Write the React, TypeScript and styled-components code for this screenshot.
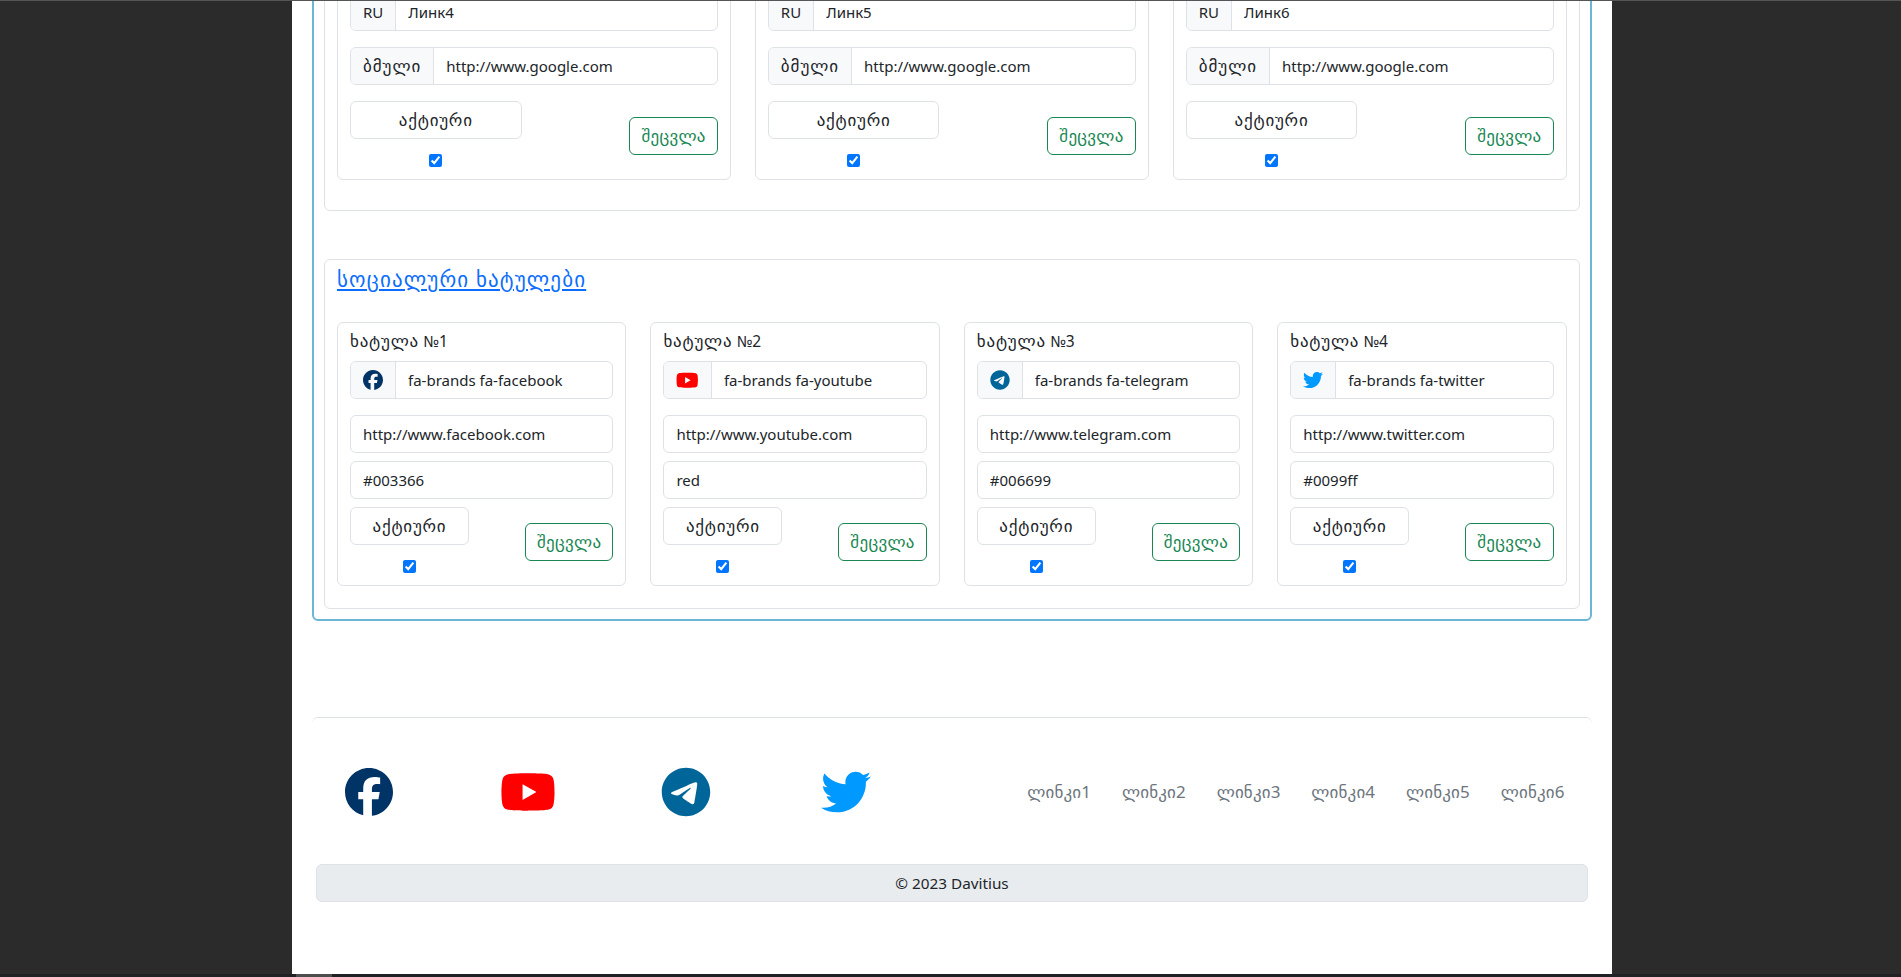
import React from "react";
import styled, { createGlobalStyle } from "styled-components";
import { FaFacebook, FaYoutube, FaTelegram, FaTwitter } from "react-icons/fa6";

const Global = createGlobalStyle`
  html, body { margin: 0; height: 100%; overflow: hidden; background: #2b2b2b; }
  body { font-family: "Noto Sans", "DejaVu Sans", sans-serif; font-size: 16px; line-height: 1.5; color: #212529; }
  * { box-sizing: border-box; }
`;

const Page = styled.div`
  display: flex;
  flex-direction: column;
  height: 977px;
  overflow: hidden;
  background: #2b2b2b;
`;
const TopEdge = styled.div`
  height: 1px;
  flex: none;
  background: #555;
`;
const Viewport = styled.div`
  flex: 1;
  min-height: 0;
  overflow: hidden;
  padding-left: 292px;
`;
const Sheet = styled.main`
  width: 1320px;
  height: 100%;
  background: #fff;
  padding: 0 20px 72px;
  display: flex;
  flex-direction: column;
  justify-content: flex-end;
  & > * { flex: none; }
`;
const ScrollTrack = styled.div`
  height: 3px;
  flex: none;
  background: #202124;
`;
const ScrollThumb = styled.div`
  width: 36px;
  height: 3px;
  margin-left: 296px;
  background: #4d4d4d;
`;
const Panel = styled.section`
  border: 2px solid #6bb5d5;
  border-radius: 6px;
  padding: 12px 10px 10px;
  display: flex;
  flex-direction: column;
  gap: 48px;
`;
const Section = styled.div<{ $bottom: number }>`
  border: 1px solid #dee2e6;
  border-radius: 6px;
  padding: 0 12.4px ${(p) => p.$bottom}px 12px;
`;
const SectionLink = styled.a`
  display: block;
  font-size: 21px;
  letter-spacing: 1.15px;
  line-height: 39px;
  height: 30px;
  color: #0d6efd;
  text-decoration: underline;
  margin-bottom: 32px;
`;
const Cards = styled.div<{ $cols: number }>`
  display: grid;
  grid-template-columns: repeat(${(p) => p.$cols}, minmax(0, 1fr));
  gap: 24px;
`;
const Card = styled.div`
  border: 1px solid #dee2e6;
  border-radius: 6px;
  padding: 12px;
`;
const CardLabel = styled.div`
  height: 26px;
  font-size: 15.5px;
  line-height: 12px;
`;
const LabelWord = styled.span`
  font-size: 17px;
  letter-spacing: 0.8px;
`;
const Group = styled.div<{ $mb: number }>`
  display: flex;
  height: 38px;
  margin-bottom: ${(p) => p.$mb}px;
  border: 1px solid #dee2e6;
  border-radius: 6px;
  overflow: hidden;
  background: #fff;
`;
const Addon = styled.span`
  flex: none;
  display: flex;
  align-items: center;
  padding: 0 12px;
  background: #f8f9fa;
  border-right: 1px solid #dee2e6;
  font-size: 15px;
`;
const WordAddon = styled(Addon)`
  font-size: 17px;
  letter-spacing: 0.95px;
`;
const AddonIcon = styled(Addon)<{ $color: string; $size: number }>`
  color: ${(p) => p.$color};
  font-size: ${(p) => p.$size}px;
`;
const Field = styled.input`
  flex: 1;
  min-width: 0;
  width: 100%;
  height: 100%;
  border: 0;
  outline: 0;
  padding: 0 12px;
  background: transparent;
  font: inherit;
  font-size: 15px;
  color: #212529;
`;
const Actions = styled.div`
  display: flex;
  justify-content: space-between;
  align-items: flex-start;
`;
const ActiveColumn = styled.div<{ $width: number }>`
  width: ${(p) => p.$width}px;
  display: flex;
  flex-direction: column;
  align-items: center;
  gap: 15px;
`;
const ActiveBox = styled.div`
  width: 100%;
  height: 38px;
  display: flex;
  align-items: center;
  justify-content: center;
  border: 1px solid #dee2e6;
  border-radius: 6px;
  font-size: 17px;
  letter-spacing: 0.77px;
`;
const Check = styled.input`
  width: 13px;
  height: 13px;
  margin: 0;
  display: block;
  accent-color: #0075ff;
`;
const SaveButton = styled.button`
  margin-top: 16px;
  width: 88.5px;
  height: 38px;
  border: 1px solid #198754;
  border-radius: 6px;
  background: #fff;
  color: #198754;
  font: inherit;
  font-size: 17px;
  letter-spacing: 0.3px;
  padding: 0;
`;
const FooterCard = styled.footer`
  margin-top: 96px;
  border-top: 1px solid #dee2e6;
  border-radius: 6px;
  padding: 50px 12px 0 32.5px;
  display: flex;
  justify-content: space-between;
  align-items: center;
`;
const SocialRow = styled.div`
  display: grid;
  grid-template-columns: 155px 161.7px 159.6px 50px;
  align-items: center;
`;
const SocialIcon = styled.a<{ $color: string; $size: number }>`
  display: flex;
  height: 48px;
  align-items: center;
  color: ${(p) => p.$color};
  font-size: ${(p) => p.$size}px;
  line-height: 1;
`;
const Nav = styled.nav`
  display: flex;
`;
const NavLink = styled.a`
  width: 94.7px;
  text-align: center;
  font-size: 17px;
  letter-spacing: 0.15px;
  color: #6c757d;
  text-decoration: none;
`;
const Copyright = styled.div`
  margin: 48px 4px 0;
  height: 38px;
  display: flex;
  align-items: center;
  justify-content: center;
  background: #e9ecef;
  border: 1px solid #dee2e6;
  border-radius: 6px;
  font-size: 15.3px;
`;

const linkCards = ["Линк4", "Линк5", "Линк6"];
const socials = [
  { icon: <FaFacebook />, cls: "fa-brands fa-facebook", url: "http://www.facebook.com", color: "#003366", big: 48, small: 20 },
  { icon: <FaYoutube />, cls: "fa-brands fa-youtube", url: "http://www.youtube.com", color: "red", big: 56, small: 22.5 },
  { icon: <FaTelegram />, cls: "fa-brands fa-telegram", url: "http://www.telegram.com", color: "#006699", big: 50, small: 20 },
  { icon: <FaTwitter />, cls: "fa-brands fa-twitter", url: "http://www.twitter.com", color: "#0099ff", big: 50, small: 20 },
];
const footerLinks = [1, 2, 3, 4, 5, 6];

function CardActions({ width }: { width: number }) {
  return (
    <Actions>
      <ActiveColumn $width={width}>
        <ActiveBox>აქტიური</ActiveBox>
        <Check type="checkbox" defaultChecked />
      </ActiveColumn>
      <SaveButton>შეცვლა</SaveButton>
    </Actions>
  );
}

export default function App() {
  return (
    <Page>
      <Global />
      <TopEdge />
      <Viewport>
        <Sheet>
          <Panel>
            <Section $bottom={30}>
              <Cards $cols={3}>
                {linkCards.map((name) => (
                  <Card key={name}>
                    <Group $mb={16}>
                      <Addon>RU</Addon>
                      <Field readOnly value={name} />
                    </Group>
                    <Group $mb={16}>
                      <WordAddon>ბმული</WordAddon>
                      <Field readOnly value="http://www.google.com" />
                    </Group>
                    <CardActions width={171.6} />
                  </Card>
                ))}
              </Cards>
            </Section>
            <Section $bottom={22}>
              <SectionLink href="#">სოციალური ხატულები</SectionLink>
              <Cards $cols={4}>
                {socials.map((s, i) => (
                  <Card key={s.cls}>
                    <CardLabel>
                      <LabelWord>ხატულა</LabelWord> №{i + 1}
                    </CardLabel>
                    <Group $mb={16}>
                      <AddonIcon $color={s.color} $size={s.small}>
                        {s.icon}
                      </AddonIcon>
                      <Field readOnly value={s.cls} />
                    </Group>
                    <Group $mb={8}>
                      <Field readOnly value={s.url} />
                    </Group>
                    <Group $mb={8}>
                      <Field readOnly value={s.color} />
                    </Group>
                    <CardActions width={119} />
                  </Card>
                ))}
              </Cards>
            </Section>
          </Panel>
          <FooterCard>
            <SocialRow>
              {socials.map((s) => (
                <SocialIcon key={s.cls} href="#" $color={s.color} $size={s.big}>
                  {s.icon}
                </SocialIcon>
              ))}
            </SocialRow>
            <Nav>
              {footerLinks.map((n) => (
                <NavLink key={n} href="#">
                  ლინკი{n}
                </NavLink>
              ))}
            </Nav>
          </FooterCard>
          <Copyright>© 2023 Davitius</Copyright>
        </Sheet>
      </Viewport>
      <ScrollTrack>
        <ScrollThumb />
      </ScrollTrack>
    </Page>
  );
}
